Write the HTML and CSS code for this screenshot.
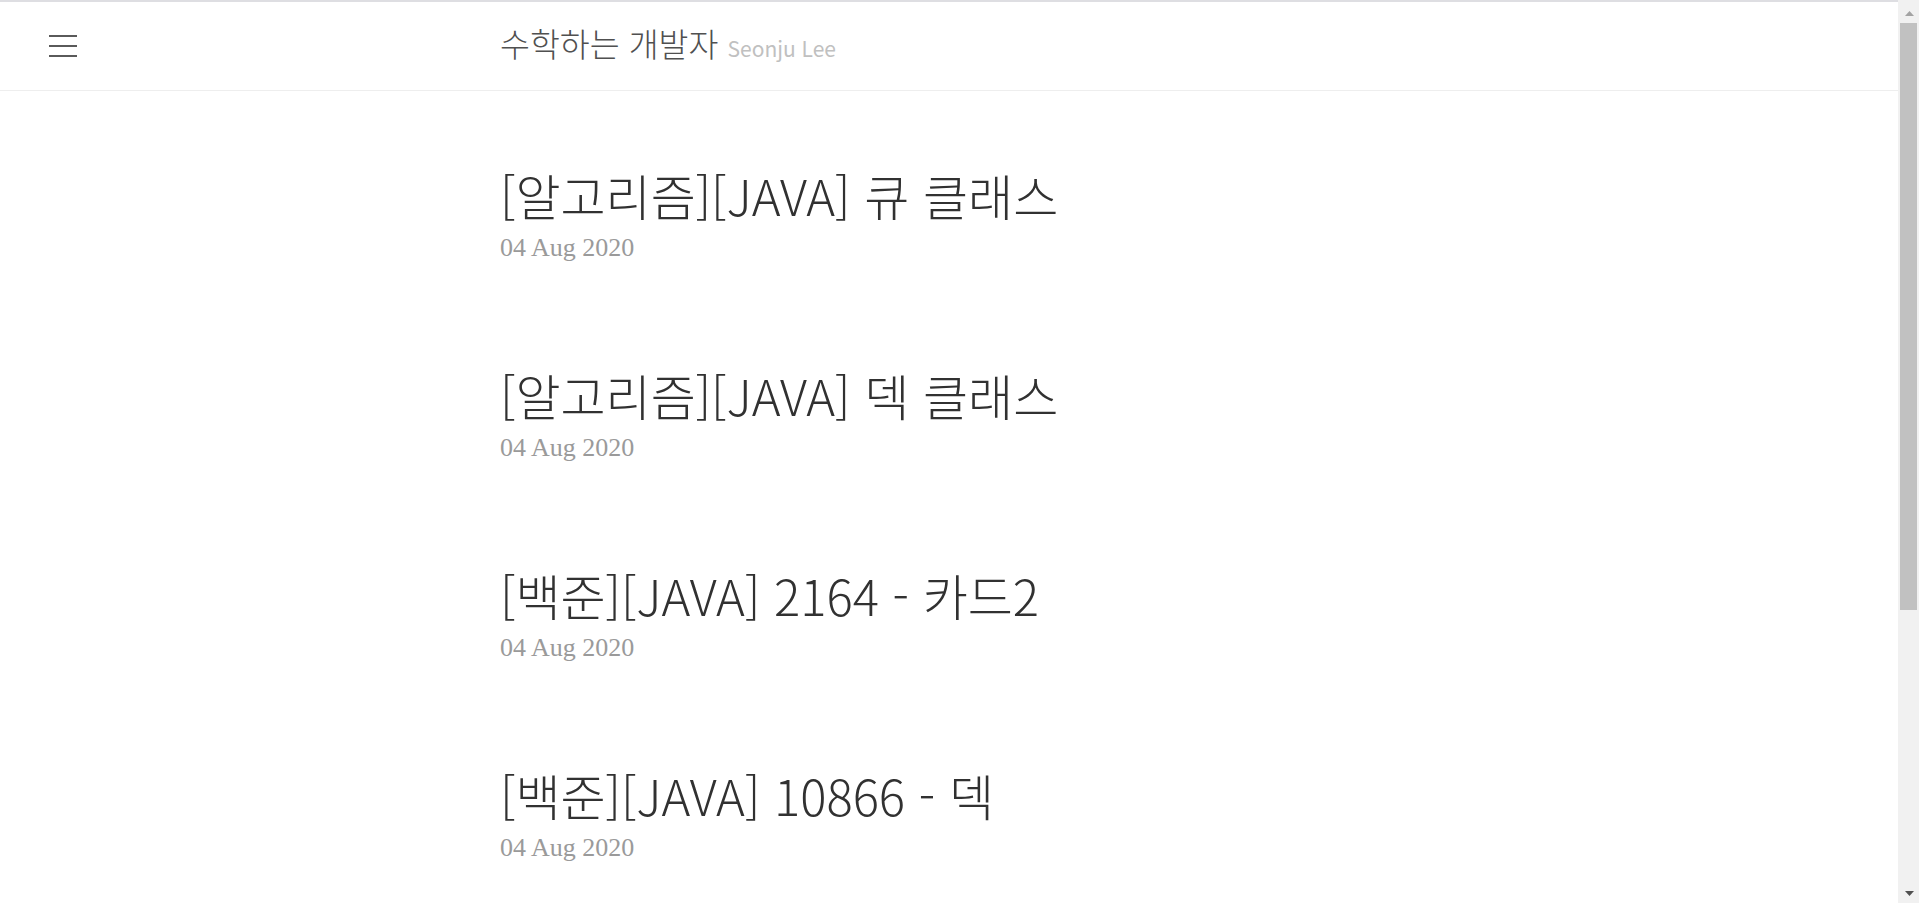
FILE: index.html
```html
<!DOCTYPE html>
<html lang="ko">
<head>
<meta charset="utf-8">
<title>수학하는 개발자</title>
<link rel="stylesheet" href="styles.css">
</head>
<body>
<div class="page">
  <header class="masthead">
    <button class="toggle" aria-label="menu"><span></span><span></span><span></span></button>
    <div class="container">
      <h3 class="masthead-title"><a href="#">수학하는 개발자</a> <small>Seonju Lee</small></h3>
    </div>
  </header>
  <main class="container posts">
    <article class="post">
      <h1 class="post-title"><a href="#">[알고리즘][JAVA] 큐 클래스</a></h1>
      <span class="post-date">04 Aug 2020</span>
    </article>
    <article class="post">
      <h1 class="post-title"><a href="#">[알고리즘][JAVA] 덱 클래스</a></h1>
      <span class="post-date">04 Aug 2020</span>
    </article>
    <article class="post">
      <h1 class="post-title"><a href="#">[백준][JAVA] 2164 - 카드2</a></h1>
      <span class="post-date">04 Aug 2020</span>
    </article>
    <article class="post">
      <h1 class="post-title"><a href="#">[백준][JAVA] 10866 - 덱</a></h1>
      <span class="post-date">04 Aug 2020</span>
    </article>
  </main>
</div>
<aside class="scrollbar">
  <div class="sb-btn sb-up"><svg width="9" height="5" viewBox="0 0 9 5"><path d="M0 5 L4.5 0 L9 5 Z" fill="#a3a3a3"/></svg></div>
  <div class="sb-thumb"></div>
  <div class="sb-space"></div>
  <div class="sb-btn sb-down"><svg width="9" height="5" viewBox="0 0 9 5"><path d="M0 0 L9 0 L4.5 5 Z" fill="#505050"/></svg></div>
</aside>
</body>
</html>
```

FILE: styles.css
```css
html, body {
  margin: 0;
  padding: 0;
  height: 100%;
}
body {
  display: flex;
  overflow: hidden;
  background: #fff;
  font-family: "Noto Sans CJK KR", "Noto Sans", sans-serif;
  color: #313131;
}
.page {
  flex: 1;
  min-width: 0;
  border-top: 2px solid #dedee2;
  overflow: hidden;
}
.masthead {
  position: relative;
  height: 88px;
  border-bottom: 1px solid #eee;
  box-sizing: content-box;
}
.toggle {
  position: absolute;
  left: 49px;
  top: 33px;
  width: 28px;
  height: 22px;
  padding: 0;
  border: 0;
  background: none;
  display: flex;
  flex-direction: column;
  justify-content: space-between;
}
.toggle span {
  display: block;
  height: 2px;
  width: 100%;
  background: #5a5a5a;
}
.container {
  width: 898px;
  margin: 0 auto;
}
.masthead-title {
  margin: 0;
  padding-top: 21px;
  font-size: 32.5px;
  line-height: 40px;
  font-weight: 300;
  white-space: nowrap;
}
.masthead-title a {
  color: #505050;
  text-decoration: none;
}
.masthead-title small {
  font-size: 21px;
  color: #c0c0c0;
  font-weight: 400;
}
.posts {
  padding-top: 74px;
}
.post {
  margin-bottom: 103px;
}
.post-title {
  margin: 0;
  font-size: 49px;
  line-height: 60px;
  font-weight: 300;
  white-space: nowrap;
}
.post-title a {
  color: #313131;
  text-decoration: none;
}
.post-date {
  display: block;
  margin-top: 9px;
  font-family: "Liberation Serif", "DejaVu Serif", serif;
  font-size: 26px;
  line-height: 28px;
  color: #9a9a9a;
}
.scrollbar {
  width: 21px;
  flex: none;
  height: 100%;
  background: #f1f1f1;
  display: flex;
  flex-direction: column;
  align-items: stretch;
}
.sb-btn {
  display: flex;
  justify-content: center;
  padding-left: 2px;
}
.sb-up {
  height: 23px;
  align-items: flex-start;
}
.sb-up svg { margin-top: 11px; }
.sb-thumb {
  height: 587px;
  margin: 0 2px;
  background: #c1c1c1;
}
.sb-space { flex: 1; }
.sb-down {
  height: 17px;
  align-items: flex-start;
}
.sb-down svg { margin-top: 5px; }
```
